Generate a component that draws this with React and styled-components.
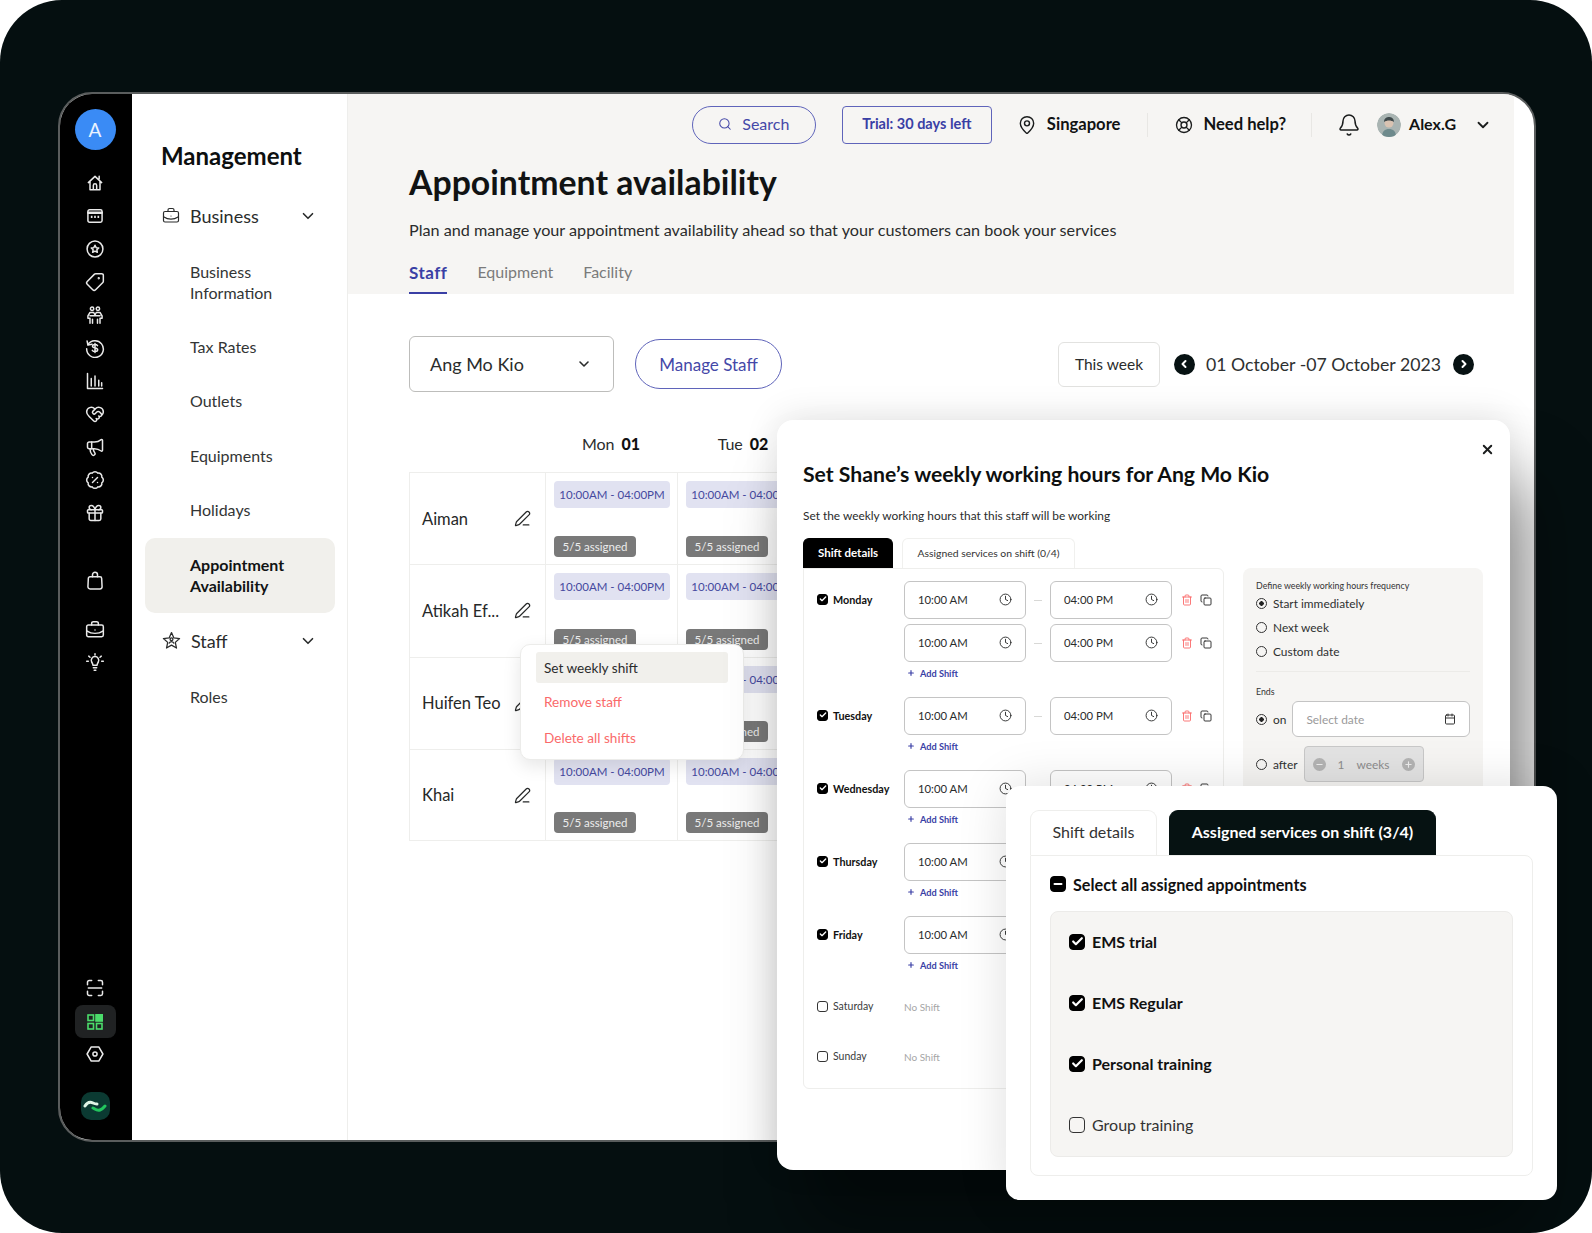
import React from "react";
import styled, { createGlobalStyle } from "styled-components";
import {
  Bell, BriefcaseBusiness, Check, ChevronDown, ChevronLeft, ChevronRight, Clock, Copy, Gift, HeartHandshake,
  LifeBuoy, MapPin, Megaphone, Minus, PenLine, Plus, Search, Tag, Trash2, BadgePercent, X, Calendar,
} from "lucide-react";

const GlobalStyle = createGlobalStyle`
  html, body { margin: 0; padding: 0; background: #fff; }
  body { font-family: "Lato", "Noto Sans", sans-serif; color: #1b1d1d; }
  * { box-sizing: border-box; }
`;

const Page = styled.div`
  width: 1592px;
  height: 1233px;
  background: #050f10;
  border-radius: 62px;
  padding: 92px 0 0 58px;
  overflow: hidden;
`;

const Frame = styled.div`
  position: relative;
  width: 1478px;
  height: 1050px;
  border: 2px solid #5a5d5d;
  border-radius: 34px;
  background: #fff;
`;

const FrameInner = styled.div`
  display: flex;
  height: 100%;
  border-radius: 32px;
  overflow: hidden;
`;

/* left icon rail */
const Rail = styled.nav`
  width: 72px;
  flex: none;
  background: #000;
  color: #e9e9e9;
  display: flex;
  flex-direction: column;
  align-items: center;
  padding: 15px 2px 20px 0;
`;

const RailAvatar = styled.div`
  width: 41px;
  height: 41px;
  border-radius: 50%;
  background: #3a8bf5;
  color: #eaf3ff;
  font-size: 19px;
  display: flex;
  align-items: center;
  justify-content: center;
  margin-bottom: 23px;
`;

const RailGroup = styled.div`
  display: flex;
  flex-direction: column;
  align-items: center;
  gap: ${(p) => p.$gap || 13}px;
  margin-top: ${(p) => p.$top || 0}px;
`;

const RailBottom = styled.div`
  margin-top: auto;
  display: flex;
  flex-direction: column;
  align-items: center;
`;

const RailActive = styled.div`
  width: 41px;
  height: 33px;
  border-radius: 8px;
  background: #202223;
  display: flex;
  align-items: center;
  justify-content: center;
  margin: 7px 0 6px;
`;

const Mark = styled.div`
  width: 29px;
  height: 28px;
  border-radius: 10px;
  background: #0b3a32;
  margin-top: 28px;
  display: flex;
  align-items: center;
  justify-content: center;
`;

const RailIcon = styled.svg.attrs({ viewBox: "0 0 24 24", fill: "none", stroke: "currentColor" })`
  width: 20px;
  height: 20px;
  stroke-width: 1.8;
  stroke-linecap: round;
  stroke-linejoin: round;
  display: block;
`;

/* management menu */
const Menu = styled.aside`
  width: 216px;
  flex: none;
  border-right: 1px solid #eeeeec;
  padding: 44px 12px 0 13px;
`;

const MenuTitle = styled.h2`
  margin: 0 0 14px 16px;
  font-size: 24px;
  line-height: 36px;
  font-weight: 700;
  color: #0d0f0f;
`;

const MenuSection = styled.div`
  height: 56px;
  display: flex;
  align-items: center;
  padding-left: 17px;
  font-size: 18px;
  color: #2a2c2c;
  gap: 10px;
  svg:last-child {
    margin-left: auto;
    margin-right: 18px;
  }
`;

const MenuItem = styled.div`
  padding: 16.7px 0 16.7px 45px;
  font-size: 16px;
  line-height: 21px;
  color: #333535;
  border-radius: 10px;
  background: ${(p) => (p.$active ? "#f1f0ec" : "transparent")};
  font-weight: ${(p) => (p.$active ? 700 : 400)};
  margin-top: ${(p) => (p.$active ? 1 : 0)}px;
  ${(p) => p.$active && "color: #121414; padding-top: 16px; padding-bottom: 17px;"}
`;

/* main column */
const Main = styled.main`
  flex: 1;
  display: flex;
  flex-direction: column;
  min-width: 0;
`;

const Header = styled.header`
  background: #f6f5f3;
  height: 200px;
  margin-right: 20px;
  padding: 12px 22px 0 61px;
  display: flex;
  flex-direction: column;
`;

const TopBar = styled.div`
  display: flex;
  align-items: center;
  justify-content: flex-end;
  height: 38px;
`;

const SearchButton = styled.div`
  width: 124px;
  height: 38px;
  border: 1.5px solid #5f64ba;
  border-radius: 19px;
  color: #4448a8;
  font-size: 16px;
  padding-bottom: 3px;
  display: flex;
  align-items: center;
  justify-content: center;
  gap: 10px;
`;

const TrialButton = styled.div`
  width: 150px;
  height: 38px;
  border: 1.5px solid #5f64ba;
  border-radius: 4px;
  color: #3a3fa5;
  font-size: 14.5px;
  font-weight: 700;
  padding-bottom: 3px;
  margin: 0 25px 0 26px;
  display: flex;
  align-items: center;
  justify-content: center;
`;

const TopLabel = styled.span`
  font-size: ${(p) => p.$size || 16.6}px;
  font-weight: 700;
  color: #111313;
  margin-left: ${(p) => p.$left || 10}px;
  margin-bottom: 3px;
`;

const TopDivider = styled.span`
  width: 1px;
  height: 24px;
  background: #e8e7e4;
  margin: 0 ${(p) => p.$space || 25}px;
`;

const Avatar = styled.svg.attrs({ viewBox: "0 0 24 24" })`
  width: 24px;
  height: 24px;
  border-radius: 50%;
  margin-left: 16px;
`;

const EndChevron = styled(ChevronDown)`
  margin-left: 18px;
`;

const PageTitle = styled.h1`
  margin: 17px 0 0;
  font-size: 33.8px;
  line-height: 42px;
  font-weight: 700;
  color: #111313;
`;

const PageSub = styled.p`
  margin: 15px 0 0;
  font-size: 16.2px;
  line-height: 24px;
  color: #2a2c2c;
`;

const Tabs = styled.div`
  display: flex;
  gap: 30px;
  margin-top: 15px;
`;

const TabLink = styled.div`
  height: 37px;
  padding-top: 5px;
  font-size: ${(p) => (p.$active ? 17 : 16)}px;
  letter-spacing: ${(p) => (p.$active ? 0.5 : 0)}px;
  font-weight: ${(p) => (p.$active ? 700 : 400)};
  color: ${(p) => (p.$active ? "#3a3fa5" : "#7a7b7b")};
  border-bottom: 2px solid ${(p) => (p.$active ? "#3a3fa5" : "transparent")};
`;

const Body = styled.section`
  padding: 42px 60px 0 61px;
  position: relative;
`;

const Toolbar = styled.div`
  display: flex;
  align-items: center;
  height: 56px;
`;

const OutletSelect = styled.div`
  width: 205px;
  height: 56px;
  border: 1px solid #bdbdbb;
  border-radius: 6px;
  display: flex;
  align-items: center;
  justify-content: space-between;
  padding: 0 21px 0 20px;
  font-size: 18px;
  color: #2a2c2c;
`;

const ManageButton = styled.div`
  width: 147px;
  height: 50px;
  margin-left: 21px;
  border: 1.5px solid #5f64ba;
  border-radius: 25px;
  color: #4448a8;
  font-size: 17px;
  display: flex;
  align-items: center;
  justify-content: center;
`;

const WeekButton = styled.div`
  width: 102px;
  height: 45px;
  margin-left: auto;
  margin-right: 14px;
  border: 1.5px solid #e2e2e0;
  border-radius: 6px;
  font-size: 15.5px;
  color: #2a2c2c;
  display: flex;
  align-items: center;
  justify-content: center;
`;

const RoundNav = styled.span`
  width: 21px;
  height: 21px;
  border-radius: 50%;
  background: #071213;
  color: #fff;
  display: flex;
  align-items: center;
  justify-content: center;
`;

const WeekRange = styled.span`
  font-size: 17.7px;
  color: #2e3030;
  margin: 0 12px 0 11px;
`;

/* staff table */
const Table = styled.div`
  position: relative;
  width: 400px;
  margin-top: 38px;
`;

const TableHead = styled.div`
  display: grid;
  grid-template-columns: 136px 132px 132px;
  height: 42px;
  align-items: start;
  font-size: 16px;
`;

const DayCol = styled.div`
  text-align: center;
  line-height: 28px;
  color: #2a2c2c;
  b {
    margin-left: 7px;
    font-weight: 900;
    color: #111;
  }
`;

const TableRow = styled.div`
  display: grid;
  grid-template-columns: 136px 132px 132px;
  height: 92.3px;
  border-top: 1px solid #eeeeec;
  border-left: 1px solid #eeeeec;
  &:nth-last-child(2) {
    border-bottom: 1px solid #eeeeec;
  }
`;

const NameCell = styled.div`
  display: flex;
  align-items: center;
  justify-content: space-between;
  padding: 0 14px 0 12px;
  border-right: 1px solid #eeeeec;
  font-size: 16.5px;
  color: #262828;
`;

const ShiftCell = styled.div`
  padding: 8px 8px 7px;
  border-right: 1px solid #eeeeec;
  display: flex;
  flex-direction: column;
  justify-content: space-between;
  align-items: flex-start;
`;

const ShiftPill = styled.div`
  width: 116px;
  height: 27px;
  flex: none;
  border-radius: 4px;
  background: #e1e2f1;
  color: #45499f;
  font-size: 11.5px;
  white-space: nowrap;
  display: flex;
  align-items: center;
  justify-content: center;
`;

const AssignedBadge = styled.div`
  width: 82px;
  height: 21px;
  border-radius: 4px;
  background: #797979;
  color: #ededed;
  font-size: 11.5px;
  display: flex;
  align-items: center;
  justify-content: center;
`;

const RowMenu = styled.div`
  position: absolute;
  left: 111px;
  top: 214px;
  width: 224px;
  height: 116px;
  background: #fff;
  border: 1px solid #ececea;
  border-radius: 10px;
  box-shadow: 0 6px 18px rgba(0, 0, 0, 0.1);
  padding: 7px 15px;
  font-size: 13.6px;
  z-index: 2;
`;

const RowMenuItem = styled.div`
  height: ${(p) => (p.$active ? 31 : 35)}px;
  border-radius: 3px;
  display: flex;
  align-items: center;
  padding-left: 8px;
  background: ${(p) => (p.$active ? "#f1f0ec" : "transparent")};
  color: ${(p) => (p.$danger ? "#fa6a6a" : "#2a2c2c")};
  margin-top: ${(p) => (p.$active ? 0 : 1)}px;
`;

/* weekly hours modal */
const HoursModal = styled.div`
  position: absolute;
  left: 717px;
  top: 326px;
  width: 733px;
  height: 750px;
  background: #fff;
  border-radius: 16px;
  padding: 38px 26px 0;
  box-shadow: 24px 60px 70px rgba(0, 0, 0, 0.42), 0 -4px 34px rgba(0, 0, 0, 0.1);
  z-index: 3;
`;

const CloseButton = styled(X)`
  position: absolute;
  top: 22px;
  right: 15px;
`;

const ModalTitle = styled.h3`
  margin: 0;
  font-size: 21.2px;
  line-height: 32px;
  font-weight: 700;
  color: #0d0f0f;
`;

const ModalSub = styled.p`
  margin: 16px 0 0;
  font-size: 11.9px;
  line-height: 20px;
  color: #2a2c2c;
`;

const ModalColumns = styled.div`
  display: flex;
  gap: 19px;
  margin-top: 12px;
`;

const ShiftColumn = styled.div`
  width: 421px;
  flex: none;
`;

const SheetTabs = styled.div`
  display: flex;
  gap: 9px;
  height: 30px;
`;

const SheetTab = styled.div`
  width: ${(p) => p.$w}px;
  border-radius: 6px 6px 0 0;
  background: ${(p) => (p.$active ? "#000" : "#fff")};
  color: ${(p) => (p.$active ? "#fff" : "#333")};
  font-weight: ${(p) => (p.$active ? 700 : 400)};
  border: 1px solid ${(p) => (p.$active ? "#000" : "#f0f0ee")};
  border-bottom: none;
  font-size: ${(p) => (p.$active ? 11.5 : 10.4)}px;
  padding-bottom: 2px;
  display: flex;
  align-items: center;
  justify-content: center;
`;

const ShiftCard = styled.div`
  height: 521px;
  border: 1px solid #eeeeec;
  border-radius: 0 6px 6px 6px;
  padding: 12px 6px 0 13px;
`;

const DayRow = styled.div`
  display: grid;
  grid-template-columns: 87px 1fr;
  margin-bottom: ${(p) => p.$tail || 13}px;
`;

const DayLabel = styled.label`
  display: flex;
  align-items: center;
  gap: 5px;
  height: 38px;
  padding-bottom: 2px;
  font-size: ${(p) => (p.$on ? 10.8 : 10.5)}px;
  font-weight: ${(p) => (p.$on ? 700 : 400)};
  color: ${(p) => (p.$on ? "#111" : "#3a3c3c")};
`;

const Slots = styled.div`
  display: flex;
  flex-direction: column;
  gap: 5px;
`;

const Slot = styled.div`
  display: flex;
  align-items: center;
  height: 38px;
`;

const TimeField = styled.div`
  width: 122px;
  height: 38px;
  border: 1px solid #c4c4c4;
  border-radius: 6px;
  padding: 0 13px 1px 13px;
  font-size: 11.3px;
  color: #2a2c2c;
  display: flex;
  align-items: center;
  justify-content: space-between;
`;

const Dash = styled.span`
  width: 8px;
  height: 1px;
  background: #d8d8d6;
  margin: 0 8px;
`;

const SlotActions = styled.div`
  display: flex;
  align-items: center;
  gap: 7px;
  margin-left: 9px;
`;

const AddShift = styled.div`
  display: flex;
  align-items: center;
  gap: 5px;
  height: 22px;
  padding-left: 3px;
  font-size: 9.2px;
  font-weight: 700;
  color: #3a3fa5;
`;

const NoShift = styled.div`
  height: 50px;
  display: grid;
  grid-template-columns: 87px 1fr;
  align-items: center;
  font-size: 10px;
  color: #a6a6a6;
`;

const FreqPanel = styled.div`
  width: 240px;
  height: 300px;
  margin-top: 30px;
  flex: none;
  border-radius: 8px;
  background: #f6f5f3;
  padding: 12px 13px;
  font-size: 11.9px;
  color: #2f3131;
`;

const FreqHeading = styled.div`
  font-size: 8.8px;
  line-height: 11px;
  color: #333;
`;

const RadioRow = styled.div`
  display: flex;
  align-items: center;
  gap: 6px;
  height: ${(p) => p.$h || 24}px;
`;

const RadioDot = styled.span`
  width: 11px;
  height: 11px;
  flex: none;
  border-radius: 50%;
  border: 1px solid #333;
  background: radial-gradient(circle, ${(p) => (p.$on ? "#222 0 2px" : "transparent 0 2px")}, transparent 2.5px);
`;

const FreqDivider = styled.div`
  height: 1px;
  background: #ecebe8;
  margin: 8px 0 14px;
`;

const DateField = styled.div`
  width: 178px;
  height: 36px;
  margin-left: auto;
  background: #fff;
  border: 1px solid #c4c4c4;
  border-radius: 6px;
  padding: 0 13px;
  color: #9a9a9a;
  display: flex;
  align-items: center;
  justify-content: space-between;
`;

const WeeksField = styled.div`
  width: 120px;
  height: 36px;
  background: #e3e3e3;
  border: 1px solid #c8c8c8;
  border-radius: 4px;
  color: #8c8c8c;
  display: flex;
  align-items: center;
  justify-content: center;
  gap: 12px;
`;

const StepDot = styled.span`
  width: 13px;
  height: 13px;
  border-radius: 50%;
  background: #b3b3b3;
  color: #eee;
  display: flex;
  align-items: center;
  justify-content: center;
`;

/* assigned services modal */
const ServicesModal = styled.div`
  position: absolute;
  left: 946px;
  top: 692px;
  width: 551px;
  height: 414px;
  background: #fff;
  border-radius: 14px;
  padding: 24px 24px 0;
  box-shadow: 0 0 50px rgba(0, 0, 0, 0.13);
  z-index: 4;
`;

const ServiceTabs = styled.div`
  display: flex;
  gap: 12px;
  height: 45px;
`;

const ServiceTab = styled.div`
  width: ${(p) => p.$w}px;
  border-radius: 9px 9px 0 0;
  background: ${(p) => (p.$active ? "#061212" : "#fff")};
  color: ${(p) => (p.$active ? "#fff" : "#333")};
  font-weight: ${(p) => (p.$active ? 700 : 400)};
  border: 1px solid ${(p) => (p.$active ? "#061212" : "#eeeeec")};
  border-bottom: none;
  font-size: 16px;
  padding-bottom: 3px;
  display: flex;
  align-items: center;
  justify-content: center;
`;

const ServiceCard = styled.div`
  width: 503px;
  height: 321px;
  border: 1px solid #eeeeec;
  border-radius: 0 8px 8px 8px;
  padding: 19px 19px 0;
`;

const SelectAll = styled.div`
  display: flex;
  align-items: center;
  gap: 7px;
  height: 18px;
  font-size: 16.2px;
  font-weight: 700;
  color: #111;
`;

const ServiceList = styled.div`
  margin-top: 18px;
  height: 246px;
  border: 1px solid #ecebe9;
  border-radius: 8px;
  background: #f6f5f3;
  padding: 0 18px;
`;

const ServiceRow = styled.div`
  display: flex;
  align-items: center;
  gap: 7px;
  height: 61px;
  font-size: 16px;
  font-weight: ${(p) => (p.$on ? 700 : 400)};
  color: ${(p) => (p.$on ? "#111" : "#333")};
  &:first-child {
    margin-top: -1px;
  }
`;

const Box = styled.span`
  width: ${(p) => p.$size}px;
  height: ${(p) => p.$size}px;
  flex: none;
  border-radius: ${(p) => (p.$size > 12 ? 4 : 3)}px;
  background: ${(p) => (p.$on ? "#000" : "transparent")};
  border: 1px solid ${(p) => (p.$on ? "#000" : "#333")};
  color: #fff;
  display: flex;
  align-items: center;
  justify-content: center;
`;

const HomeGlyph = () => (
  <RailIcon>
    <path d="M4 11.5 12 4l8 7.5M6 10v10h12V10M10 20v-5a2 2 0 0 1 4 0v5M17 4v3" />
  </RailIcon>
);
const CalendarGlyph = () => (
  <RailIcon>
    <rect x="3.5" y="4.5" width="17" height="15" rx="2" />
    <path d="M4 8h16" strokeWidth="3" />
    <path d="M7 13h2M11 13h2M15 13h2" strokeWidth="2.5" strokeLinecap="butt" />
  </RailIcon>
);
const StarCircleGlyph = () => (
  <RailIcon>
    <circle cx="12" cy="12" r="9.5" />
    <path d="m12 7.5 1.4 2.9 3.1.4-2.3 2.1.6 3.1-2.8-1.5-2.8 1.5.6-3.1-2.3-2.1 3.1-.4z" />
  </RailIcon>
);
const PeopleGlyph = () => (
  <RailIcon>
    <circle cx="8.5" cy="4.5" r="2" />
    <circle cx="15.5" cy="4.5" r="2" />
    <path d="M6 22v-6H3.5v-3L6 9h4.5l1.5 3 1.5-3H18l2.5 4v3H18v6M9 22v-5M15 22v-5M6 13h12" />
  </RailIcon>
);
const RefundGlyph = () => (
  <RailIcon>
    <path d="M3.5 8A10 10 0 1 1 2 13" />
    <path d="M2.5 3.5 3.5 8.5l5-1" />
    <path d="M15 9.2c-.6-.9-1.700-1.300-3-1.300-1.700 0-3 .8-3 2.100 0 3 6.200 1.200 6.200 4.100 0 1.300-1.400 2.100-3.200 2.100-1.400 0-2.600-.5-3.200-1.400M12 6.500v11" />
  </RailIcon>
);
const ChartGlyph = () => (
  <RailIcon>
    <path d="M3 3v18h18M7.5 18v-9M12 18V6M16.5 18v-7M20 18v-4" />
  </RailIcon>
);
const BagGlyph = () => (
  <RailIcon>
    <path d="M6 7h12a2 2 0 0 1 2 2l.5 10a2.500 2.500 0 0 1-2.500 2.500H6A2.500 2.500 0 0 1 3.500 19L4 9a2 2 0 0 1 2-2z" />
    <path d="M9 7V4.500a3 3 0 0 1 6 0V7" />
  </RailIcon>
);
const BulbGlyph = () => (
  <RailIcon>
    <path d="M8 12a4.500 4.500 0 1 1 8 0c-.8 1.300-1.500 2-1.500 4h-5c0-2-.7-2.700-1.500-4zM10 19h4M11 22h2" />
    <path d="M12 2v1.500M4.500 5 6 6.300M19.500 5 18 6.300M2 11h2M20 11h2" />
  </RailIcon>
);
const ScanGlyph = () => (
  <RailIcon>
    <path d="M3 8V5a2 2 0 0 1 2-2h3M16 3h3a2 2 0 0 1 2 2v3M21 16v3a2 2 0 0 1-2 2h-3M8 21H5a2 2 0 0 1-2-2v-3M4 12h16" />
  </RailIcon>
);
const GridGlyph = () => (
  <svg width="16" height="16" viewBox="0 0 16 16" fill="none" stroke="#4bdc6b" strokeWidth="1.6">
    <rect x="1" y="1" width="5.5" height="5.5" />
    <rect x="9" y="0.8" width="6.2" height="6.2" fill="#4bdc6b" />
    <rect x="1" y="9.5" width="5.5" height="5.5" />
    <rect x="9.5" y="9.5" width="5.500" height="5.500" />
  </svg>
);
const HexGlyph = () => (
  <RailIcon>
    <path d="M7.500 3.500h9L21.500 12l-5 8.500h-9L2.500 12z" />
    <circle cx="12" cy="12" r="2.500" />
  </RailIcon>
);
const LogoGlyph = () => (
  <svg width="24" height="14" viewBox="0 0 24 14" fill="none" strokeWidth="3" strokeLinecap="round">
    <path d="M2 7c3-5 6-4 8-3s3 1 4 1" stroke="#dff5e6" />
    <path d="M10 9c2 1 4 3 7 2s4-3 5-4" stroke="#22c55e" />
  </svg>
);
const StaffGlyph = () => (
  <svg width="19" height="19" viewBox="0 0 24 24" fill="none" stroke="#2a2c2c" strokeWidth="1.6" strokeLinejoin="round">
    <path d="m12 2 3 6.700 7.200.8-5.400 4.900 1.500 7.100L12 17.900l-6.300 3.600 1.500-7.100L1.800 9.500 9 8.700z" />
    <circle cx="12" cy="10.500" r="1.800" />
    <path d="M8.800 16c.4-1.800 1.700-2.700 3.200-2.700s2.800.9 3.200 2.700" />
  </svg>
);

const railTop = [
  <HomeGlyph key="home" />,
  <CalendarGlyph key="cal" />,
  <StarCircleGlyph key="star" />,
  <Tag key="tag" size={20} strokeWidth={1.8} transform="scale(-1 1)" />,
  <PeopleGlyph key="people" />,
  <RefundGlyph key="refund" />,
  <ChartGlyph key="chart" />,
  <HeartHandshake key="heart" size={20} strokeWidth={1.8} />,
  <Megaphone key="mega" size={20} strokeWidth={1.8} />,
  <BadgePercent key="percent" size={20} strokeWidth={1.8} />,
  <Gift key="gift" size={20} strokeWidth={1.8} />,
];

const staff = ["Aiman", "Atikah Ef...", "Huifen Teo", "Khai"];

const week = [
  { day: "Monday", slots: 2 },
  { day: "Tuesday", slots: 1 },
  { day: "Wednesday", slots: 1 },
  { day: "Thursday", slots: 1 },
  { day: "Friday", slots: 1 },
];

const services = [
  { name: "EMS trial", on: true },
  { name: "EMS Regular", on: true },
  { name: "Personal training", on: true },
  { name: "Group training", on: false },
];

function CheckBox({ size, on, dash }) {
  return (
    <Box $size={size} $on={on}>
      {on && (dash ? <Minus size={size - 4} strokeWidth={4} /> : <Check size={size - 3} strokeWidth={4} />)}
    </Box>
  );
}

function TimeInput({ value }) {
  return (
    <TimeField>
      {value}
      <Clock size={13} strokeWidth={1.7} />
    </TimeField>
  );
}

function App() {
  return (
    <>
      <GlobalStyle />
      <Page>
        <Frame>
          <FrameInner>
            <Rail>
              <RailAvatar>A</RailAvatar>
              <RailGroup>{railTop}</RailGroup>
              <RailGroup $top={48}>
                <BagGlyph />
              </RailGroup>
              <RailGroup $top={29} $gap={12}>
                <BriefcaseBusiness size={20} strokeWidth={1.8} />
                <BulbGlyph />
              </RailGroup>
              <RailBottom>
                <ScanGlyph />
                <RailActive>
                  <GridGlyph />
                </RailActive>
                <HexGlyph />
                <Mark>
                  <LogoGlyph />
                </Mark>
              </RailBottom>
            </Rail>

            <Menu>
              <MenuTitle>Management</MenuTitle>
              <MenuSection>
                <BriefcaseBusiness size={18} strokeWidth={1.6} />
                Business
                <ChevronDown size={18} strokeWidth={2.2} />
              </MenuSection>
              <MenuItem>
                Business
                <br />
                Information
              </MenuItem>
              <MenuItem>Tax Rates</MenuItem>
              <MenuItem>Outlets</MenuItem>
              <MenuItem>Equipments</MenuItem>
              <MenuItem>Holidays</MenuItem>
              <MenuItem $active>
                Appointment
                <br />
                Availability
              </MenuItem>
              <MenuSection>
                <StaffGlyph />
                Staff
                <ChevronDown size={18} strokeWidth={2.2} />
              </MenuSection>
              <MenuItem>Roles</MenuItem>
            </Menu>

            <Main>
              <Header>
                <TopBar>
                  <SearchButton>
                    <Search size={14} strokeWidth={1.8} />
                    Search
                  </SearchButton>
                  <TrialButton>Trial: 30 days left</TrialButton>
                  <MapPin size={20} strokeWidth={1.7} />
                  <TopLabel>Singapore</TopLabel>
                  <TopDivider $space={27} />
                  <LifeBuoy size={18} strokeWidth={1.8} />
                  <TopLabel>Need help?</TopLabel>
                  <TopDivider />
                  <Bell size={24} strokeWidth={1.5} />
                  <Avatar>
                    <circle cx="12" cy="12" r="12" fill="#a9b4b2" />
                    <circle cx="12" cy="10" r="4.500" fill="#d9c3b2" />
                    <path d="M7 9c0-4 3-5 5-5s5 1 5 5c-3-2-7-2-10 0z" fill="#3f4a4c" />
                    <path d="M5 24c0-6 3-8 7-8s7 2 7 8z" fill="#6e8a8c" />
                  </Avatar>
                  <TopLabel $left={8} $size={16}>Alex.G</TopLabel>
                  <EndChevron size={18} strokeWidth={2.4} />
                </TopBar>
                <PageTitle>Appointment availability</PageTitle>
                <PageSub>Plan and manage your appointment availability ahead so that your customers can book your services</PageSub>
                <Tabs>
                  <TabLink $active>Staff</TabLink>
                  <TabLink>Equipment</TabLink>
                  <TabLink>Facility</TabLink>
                </Tabs>
              </Header>

              <Body>
                <Toolbar>
                  <OutletSelect>
                    Ang Mo Kio
                    <ChevronDown size={16} strokeWidth={2.4} />
                  </OutletSelect>
                  <ManageButton>Manage Staff</ManageButton>
                  <WeekButton>This week</WeekButton>
                  <RoundNav>
                    <ChevronLeft size={12} strokeWidth={4} />
                  </RoundNav>
                  <WeekRange>01 October -07 October 2023</WeekRange>
                  <RoundNav>
                    <ChevronRight size={12} strokeWidth={4} />
                  </RoundNav>
                </Toolbar>

                <Table>
                  <TableHead>
                    <span />
                    <DayCol>
                      Mon<b>01</b>
                    </DayCol>
                    <DayCol>
                      Tue<b>02</b>
                    </DayCol>
                  </TableHead>
                  {staff.map((name) => (
                    <TableRow key={name}>
                      <NameCell>
                        {name}
                        <PenLine size={17} strokeWidth={1.7} />
                      </NameCell>
                      {[0, 1].map((col) => (
                        <ShiftCell key={col}>
                          <ShiftPill>10:00AM - 04:00PM</ShiftPill>
                          <AssignedBadge>5/5 assigned</AssignedBadge>
                        </ShiftCell>
                      ))}
                    </TableRow>
                  ))}
                  <RowMenu>
                    <RowMenuItem $active>Set weekly shift</RowMenuItem>
                    <RowMenuItem $danger>Remove staff</RowMenuItem>
                    <RowMenuItem $danger>Delete all shifts</RowMenuItem>
                  </RowMenu>
                </Table>
              </Body>
            </Main>
          </FrameInner>

          <HoursModal>
            <CloseButton size={15} strokeWidth={3} />
            <ModalTitle>Set Shane’s weekly working hours for Ang Mo Kio</ModalTitle>
            <ModalSub>Set the weekly working hours that this staff will be working</ModalSub>
            <ModalColumns>
              <ShiftColumn>
                <SheetTabs>
                  <SheetTab $active $w={90}>Shift details</SheetTab>
                  <SheetTab $w={173}>Assigned services on shift (0/4)</SheetTab>
                </SheetTabs>
                <ShiftCard>
                  {week.map(({ day, slots }) => (
                    <DayRow key={day} $tail={day === "Friday" ? 6 : 13}>
                      <DayLabel $on>
                        <CheckBox size={11} on />
                        {day}
                      </DayLabel>
                      <div>
                        <Slots>
                          {Array.from({ length: slots }).map((_, i) => (
                            <Slot key={i}>
                              <TimeInput value="10:00 AM" />
                              <Dash />
                              <TimeInput value="04:00 PM" />
                              <SlotActions>
                                <Trash2 size={12} strokeWidth={1.8} color="#fa6a6a" />
                                <Copy size={12} strokeWidth={1.8} color="#222" />
                              </SlotActions>
                            </Slot>
                          ))}
                        </Slots>
                        <AddShift>
                          <Plus size={8} strokeWidth={3.5} />
                          Add Shift
                        </AddShift>
                      </div>
                    </DayRow>
                  ))}
                  {["Saturday", "Sunday"].map((day) => (
                    <NoShift key={day}>
                      <DayLabel>
                        <CheckBox size={11} />
                        {day}
                      </DayLabel>
                      No Shift
                    </NoShift>
                  ))}
                </ShiftCard>
              </ShiftColumn>

              <FreqPanel>
                <FreqHeading>Define weekly working hours frequency</FreqHeading>
                <RadioRow>
                  <RadioDot $on />
                  Start immediately
                </RadioRow>
                <RadioRow>
                  <RadioDot />
                  Next week
                </RadioRow>
                <RadioRow>
                  <RadioDot />
                  Custom date
                </RadioRow>
                <FreqDivider />
                <FreqHeading>Ends</FreqHeading>
                <RadioRow $h={44}>
                  <RadioDot $on />
                  on
                  <DateField>
                    Select date
                    <Calendar size={12} strokeWidth={2} color="#333" />
                  </DateField>
                </RadioRow>
                <RadioRow $h={46}>
                  <RadioDot />
                  after
                  <WeeksField>
                    <StepDot>
                      <Minus size={9} strokeWidth={3} />
                    </StepDot>
                    1
                    <span>weeks</span>
                    <StepDot>
                      <Plus size={9} strokeWidth={3} />
                    </StepDot>
                  </WeeksField>
                </RadioRow>
              </FreqPanel>
            </ModalColumns>
          </HoursModal>

          <ServicesModal>
            <ServiceTabs>
              <ServiceTab $w={127}>Shift details</ServiceTab>
              <ServiceTab $active $w={267}>Assigned services on shift (3/4)</ServiceTab>
            </ServiceTabs>
            <ServiceCard>
              <SelectAll>
                <CheckBox size={16} on dash />
                Select all assigned appointments
              </SelectAll>
              <ServiceList>
                {services.map((s) => (
                  <ServiceRow key={s.name} $on={s.on}>
                    <CheckBox size={16} on={s.on} />
                    {s.name}
                  </ServiceRow>
                ))}
              </ServiceList>
            </ServiceCard>
          </ServicesModal>
        </Frame>
      </Page>
    </>
  );
}

export default App;
